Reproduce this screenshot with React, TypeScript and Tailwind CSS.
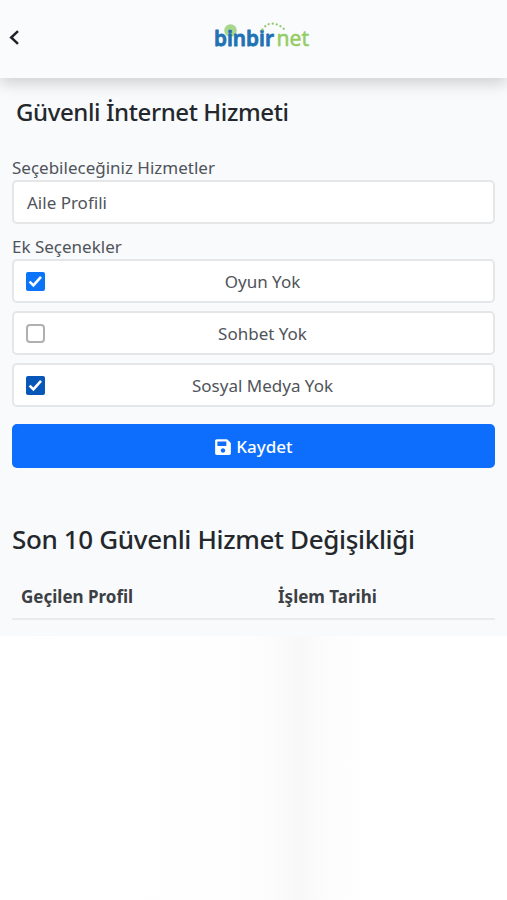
import React from "react";
import { FaSave } from "react-icons/fa";

interface OptionProps {
  label: string;
  checked?: boolean;
  active?: boolean;
}

const Logo: React.FC = () => (
  <svg width="100" height="40" viewBox="0 0 100 40" role="img" aria-label="binbirnet">
    <circle cx="17.5" cy="14.5" r="6.3" fill="#a8d68c" />
    <g fontFamily="'Noto Sans', sans-serif" fontSize="22" strokeLinejoin="round">
      <text x="1" y="29.5" textLength="60" lengthAdjust="spacingAndGlyphs" fill="#1f72b4" stroke="#1f72b4" strokeWidth="0.8" fontWeight="600">
        binbir
      </text>
      <text x="63.5" y="29.5" textLength="32.5" lengthAdjust="spacingAndGlyphs" fill="#94cc62" stroke="#94cc62" strokeWidth="0.5">
        net
      </text>
    </g>
    <path d="M49.5 13.5C54 6 63 5.5 71 13" fill="none" stroke="#8fc866" strokeWidth="2.2" strokeLinecap="round" strokeDasharray="0.1 4" />
  </svg>
);

const Option: React.FC<OptionProps> = ({ label, checked, active }) => (
  <label className="flex h-[44px] items-center rounded-[5px] border-2 border-[#e4e6e8] bg-white pr-[13px] pl-3">
    {checked ? (
      <span className={`flex size-[19px] shrink-0 items-center justify-center rounded-[2px] ${active ? "bg-[#0757b8]" : "bg-[#0b74f8]"}`}>
        <svg width="15" height="15" viewBox="0 0 15 15" fill="none" stroke="white" strokeWidth="2.6">
          <path d="M1.6 7.6L5.4 11.4L13 2.8" />
        </svg>
      </span>
    ) : (
      <span className="size-[19px] shrink-0 rounded-[4px] border-2 border-[#b0b0b0] bg-white" />
    )}
    <span className="flex-1 pt-[2px] text-center text-[17px] text-[#50545a]">{label}</span>
  </label>
);

export default function App() {
  return (
    <div className="flex h-[900px] w-full flex-col overflow-hidden bg-white font-['Noto_Sans',sans-serif]">
      <div className="h-[636px] shrink-0 bg-[#f8fafc]">
        {/* Header */}
        <header className="grid h-[78px] grid-cols-[213px_100px_1fr] items-center bg-[#f9fbfd] pb-[6px] shadow-[0_6px_14px_rgba(0,0,0,0.16)]">
          <button aria-label="Geri" className="pt-[2px] pl-[9px]">
            <svg width="11" height="15" viewBox="0 0 11 15" fill="none" stroke="#1f2226" strokeWidth="2.5">
              <path d="M9 1.2L2.2 7.5L9 13.8" />
            </svg>
          </button>
          <Logo />
        </header>

        {/* Service form */}
        <main className="px-3">
          <h1 className="mt-[18px] pl-1 text-[24px] leading-[32px] font-medium tracking-[-0.4px] whitespace-nowrap text-[#24282c]">
            Güvenli İnternet Hizmeti
          </h1>
          <div className="mt-[28px] text-[17px] leading-[24px] text-[#50545a]">Seçebileceğiniz Hizmetler</div>
          <div className="flex h-[44px] items-center rounded-[5px] border-2 border-[#e4e6e8] bg-white px-[13px] pt-[2px] text-[17px] text-[#50545a]">
            Aile Profili
          </div>
          <div className="mt-[11px] text-[17px] leading-[24px] text-[#50545a]">Ek Seçenekler</div>
          <div className="flex flex-col gap-2">
            <Option label="Oyun Yok" checked />
            <Option label="Sohbet Yok" />
            <Option label="Sosyal Medya Yok" checked active />
          </div>
          <button className="mt-[17px] flex h-[44px] w-full items-center justify-center gap-1 rounded-[5px] bg-[#0d6efd] pt-[2px] text-[17px] font-medium text-white">
            <FaSave className="size-[18px]" />
            Kaydet
          </button>

          {/* Change history */}
          <h2 className="mt-[53px] text-[26px] leading-[36px] font-medium tracking-[-0.35px] whitespace-nowrap text-[#24282c]">
            Son 10 Güvenli Hizmet Değişikliği
          </h2>
          <table className="mt-[28px] w-full table-fixed border-b-2 border-[#e9ebed] text-left text-[17px] leading-[24px] text-[#3c4044]">
            <thead>
              <tr>
                <th className="w-[257px] pb-[9px] pl-[9px] font-bold">Geçilen Profil</th>
                <th className="pb-[9px] pl-[9px] font-bold">İşlem Tarihi</th>
              </tr>
            </thead>
          </table>
        </main>
      </div>
      <div className="flex-1 bg-[linear-gradient(90deg,#fff_0%,#fefefe_46%,#fcfcfc_53%,#f8f8f8_59%,#fcfcfc_64%,#fefefe_70%,#fff_73%)]" />
    </div>
  );
}
